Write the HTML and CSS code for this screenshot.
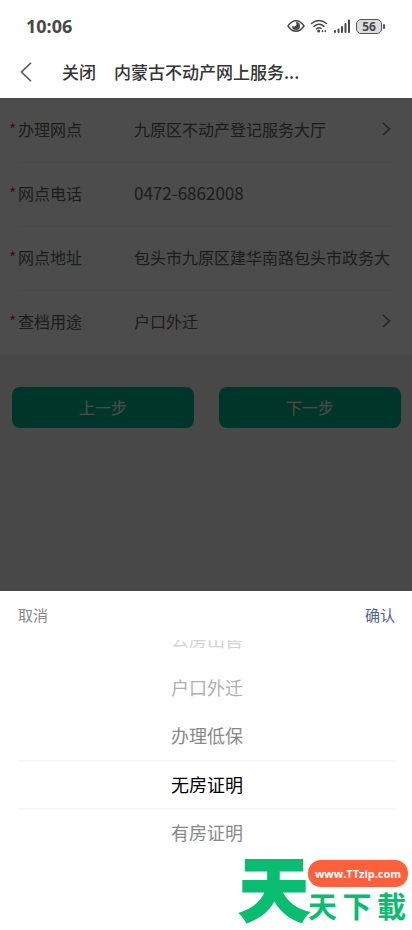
FILE: index.html
```html
<!DOCTYPE html>
<html lang="zh-CN">
<head>
<meta charset="utf-8">
<meta name="viewport" content="width=device-width, initial-scale=1">
<title>内蒙古不动产网上服务</title>
<link rel="stylesheet" href="styles.css">
</head>
<body>
<div class="status">
  <span class="time">10:06</span>
  <div class="indicators">
    <svg width="18" height="14" viewBox="0 0 18 14"><path d="M1 7Q4.500 1.800 9 1.800T17 7Q13.500 12.200 9 12.200T1 7Z" fill="none" stroke="#484848" stroke-width="1.400"/><path d="M9 3a4 4 0 1 1-4 4.200l2.600.3L9.500 5.800Z" fill="#484848"/></svg>
    <svg width="18" height="14" viewBox="0 0 18 14" fill="none" stroke="#484848" stroke-width="1.500" stroke-linecap="round"><path d="M1.500 4.500Q9-1.500 16.500 4.500M4 7.300Q9 3.200 14 7.300M6.500 9.800Q9 8 11 9.300"/><circle cx="8.700" cy="12" r="1.500" fill="#484848" stroke="none"/><path d="M12.500 11.800v.6M15.300 11.800v.6"/></svg>
    <svg width="18" height="14" viewBox="0 0 18 14" stroke="#484848" stroke-width="2" stroke-linecap="round"><path d="M2 12v1M5.500 10.500V13M9 8V13M12.500 5V13M16 1.500V13"/></svg>
    <span class="battery">56</span>
  </div>
</div>
<header class="nav">
  <button class="back" aria-label="返回"><svg width="12" height="20" viewBox="0 0 12 20" fill="none" stroke="#555" stroke-width="1.600"><path d="M11 .8 1.500 10 11 19.200"/></svg></button>
  <button class="close">关闭</button>
  <h1>内蒙古不动产网上服务...</h1>
</header>
<main class="page">
  <form class="fields">
    <div class="row">
      <label for="branch"><i>*</i>办理网点</label>
      <button type="button" id="branch" class="value">九原区不动产登记服务大厅<svg width="9" height="14" viewBox="0 0 9 14"><path d="M1 1l6.500 6L1 13"/></svg></button>
    </div>
    <div class="row">
      <label for="phone"><i>*</i>网点电话</label>
      <input id="phone" class="value phone" value="0472-6862008" readonly>
    </div>
    <div class="row">
      <label for="address"><i>*</i>网点地址</label>
      <input id="address" class="value" value="包头市九原区建华南路包头市政务大" readonly>
    </div>
    <div class="row">
      <label for="purpose"><i>*</i>查档用途</label>
      <button type="button" id="purpose" class="value">户口外迁<svg width="9" height="14" viewBox="0 0 9 14"><path d="M1 1l6.500 6L1 13"/></svg></button>
    </div>
  </form>
  <div class="steps">
    <button>上一步</button>
    <button>下一步</button>
  </div>
</main>
<section class="sheet">
  <div class="sheet-head">
    <button class="cancel">取消</button>
    <button class="confirm">确认</button>
  </div>
  <div class="picker">
    <button class="far">公房出售</button>
    <button class="mid">户口外迁</button>
    <button>办理低保</button>
    <button class="selected">无房证明</button>
    <button>有房证明</button>
  </div>
  <div class="logo">
    <span class="logo-big">天</span>
    <div class="logo-side">
      <span class="logo-url">www.TTzip.com</span>
      <span class="logo-name"><span>天</span><span>下</span><span>載</span></span>
    </div>
  </div>
</section>
</body>
</html>
```
FILE: styles.css
```css
* { box-sizing: border-box; }

body {
  margin: 0;
  min-height: 100vh;
  display: flex;
  flex-direction: column;
  background: #fff;
  color: #333;
  font: 16px/24px "Noto Sans CJK SC", sans-serif;
}

button, input {
  margin: 0;
  padding: 0;
  border: 0;
  background: none;
  color: inherit;
  font: inherit;
}

.status {
  display: flex;
  align-items: center;
  justify-content: space-between;
  height: 48px;
  padding: 4px 28px 0 26px;
  color: #484848;
}

.time { font: 700 18px/24px "Noto Sans", sans-serif; }

.indicators { display: flex; align-items: center; gap: 5px; }

.battery {
  position: relative;
  width: 26px;
  height: 15px;
  margin-right: 2px;
  border: 1px solid #555;
  border-radius: 5px;
  background: #ddd;
  font: 700 12px/13px "Noto Sans", sans-serif;
  text-align: center;
}

.battery::after {
  content: "";
  position: absolute;
  top: 4px;
  right: -4px;
  width: 2px;
  height: 5px;
  border-radius: 1px;
  background: #555;
}

.nav {
  display: flex;
  align-items: center;
  height: 50px;
  padding: 0 20px 2px;
  font-size: 17px;
  font-weight: 500;
}

.back { display: flex; margin-right: 30px; }
.close { margin-right: 18px; }

.nav h1 {
  margin: 0;
  font: inherit;
  white-space: nowrap;
}

.page {
  position: relative;
  height: 493px;
  background: #f2f2f2;
}

.page::after {
  content: "";
  position: absolute;
  inset: 0;
  background: rgba(0, 0, 0, 0.7);
}

.fields { background: #fdfdfd; color: #606060; }

.row {
  display: flex;
  align-items: center;
  height: 64px;
  margin-right: 16px;
  padding: 0 0 2px 9px;
}

.row label { flex: 0 0 125px; }
.row + .row { background: linear-gradient(#f4f4f4, #f4f4f4) 18px 0 / 100% 1px no-repeat; }

.row i {
  display: inline-block;
  width: 9px;
  color: #ff1038;
  font-style: normal;
}

.value {
  flex: 1;
  min-width: 0;
  display: flex;
  align-items: center;
  justify-content: space-between;
  text-align: left;
}

.value svg {
  margin-right: 5px;
  fill: none;
  stroke: #777;
  stroke-width: 1.5;
}

.phone { font-size: 17px; }

.steps {
  display: flex;
  gap: 25px;
  padding: 33px 11px 0 12px;
}

.steps button {
  flex: 1;
  height: 41px;
  padding-bottom: 2px;
  border-radius: 8px;
  background: #00b489;
  color: #fff;
}

.sheet { flex: 1; position: relative; }

.sheet-head {
  display: flex;
  justify-content: space-between;
  height: 49px;
  padding: 0 17px 2px 18px;
  font-size: 15px;
}

.cancel { color: #888; }
.confirm { color: #4e628f; }

.picker {
  display: flex;
  flex-direction: column;
  margin: 0 16px 0 18px;
  overflow: hidden;
}

.picker button {
  flex: none;
  height: 48px;
  padding-bottom: 2px;
  color: #888;
  font-size: 18px;
}

.picker .far { margin-top: -24px; color: #d4d4d4; }
.picker .mid { color: #b0b0b0; }

.picker .selected {
  height: 49px;
  border: solid #f4f4f4;
  border-width: 1px 0;
  color: #000;
}

.logo {
  position: absolute;
  right: 4px;
  bottom: 6px;
  display: flex;
  align-items: flex-start;
  color: #08bd70;
  font-weight: 700;
}

.logo-big {
  font-size: 68px;
  line-height: 60px;
  -webkit-text-stroke: 4px #08bd70;
}

.logo-side { padding-top: 4px; }

.logo-url {
  display: block;
  width: 100px;
  border-radius: 13px;
  background: #ff603c;
  color: #fff;
  font: 700 11px/27px "Open Sans", sans-serif;
  text-align: center;
}

.logo-name {
  display: flex;
  justify-content: space-between;
  padding-right: 2px;
  font-size: 29px;
  line-height: 37px;
}
```
